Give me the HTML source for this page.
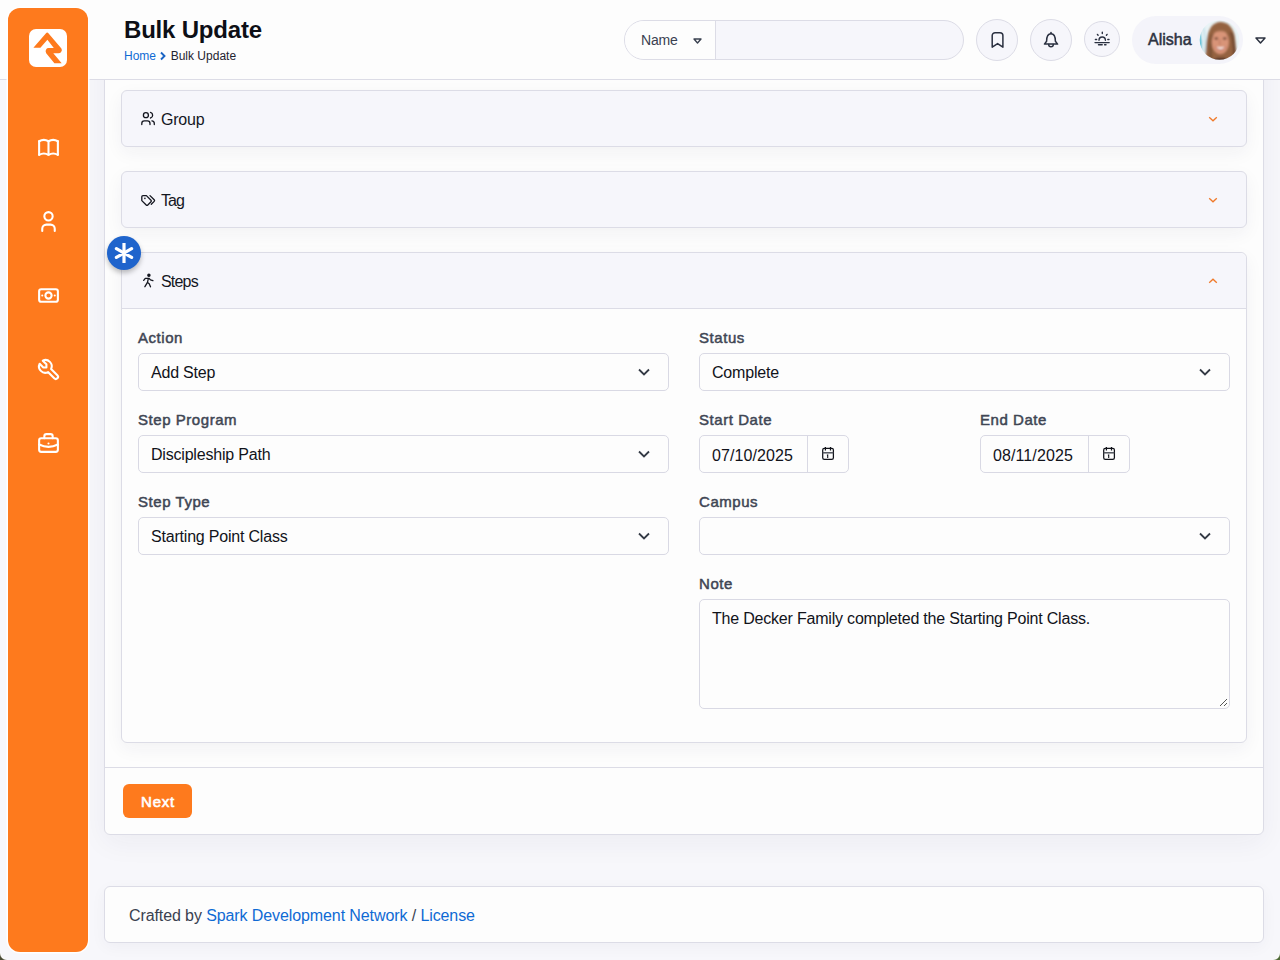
<!DOCTYPE html>
<html><head><meta charset="utf-8">
<style>
*{box-sizing:border-box;margin:0;padding:0}
html,body{width:1280px;height:960px;overflow:hidden}
body{background:#f7f7fb;font-family:"Liberation Sans",sans-serif;color:#1f2330;position:relative}
.abs{position:absolute}
#header{left:0;top:0;width:1280px;height:80px;background:#fdfdfd;border-bottom:1px solid #dcdce6}
#sidebar{left:8px;top:8px;width:80px;height:944px;background:#fe7a1d;border-radius:12px;box-shadow:0 0 0 1.5px rgba(255,255,255,.9)}
.ico{position:absolute;left:27.5px;width:25px;height:25px}
.title{left:124px;top:15px;font-size:24px;line-height:30px;font-weight:bold;color:#0d0f16;letter-spacing:-0.2px}
.crumb{left:124px;top:48px;font-size:12px;line-height:16px;color:#1f2330}
.crumb a{color:#0f6ad4;text-decoration:none}
#search{left:624px;top:20px;width:340px;height:40px;border:1px solid #dcdce6;border-radius:20px;background:#f6f6fb;overflow:hidden}
#search .l{position:absolute;left:0;top:0;width:91px;height:38px;background:#fdfdfd;border-right:1px solid #dcdce6}
.cbtn{position:absolute;border:1px solid #dcdce6;border-radius:50%;background:#f6f6fb}
#pill{left:1132px;top:16px;width:111px;height:48px;border-radius:24px;background:#f4f4fa}
#card{left:104px;top:-20px;width:1160px;height:855px;background:#fdfdfd;border:1px solid #dcdce6;border-radius:6px;box-shadow:0 8px 28px rgba(30,30,70,.05)}
.panel{position:absolute;left:121px;width:1126px;border:1px solid #dcdce6;border-radius:6px;background:#f6f6fb;box-shadow:0 6px 18px rgba(30,30,70,.05)}
.ph{position:absolute;left:0;top:0;width:100%;height:56px}
.ph .t{position:absolute;left:39px;top:20px;font-size:16px;line-height:18px;color:#14161f}
.ph svg.i{position:absolute;left:18px;top:19px}
.ph svg.c{position:absolute;left:1086px;top:25px}
.lbl{position:absolute;font-size:15px;color:#3f4654;-webkit-text-stroke:0.5px #3f4654;letter-spacing:0.55px;line-height:18px}
.inp{position:absolute;height:38px;border:1px solid #d9d9e4;border-radius:5px;background:#fdfdfd}
.inp .v{position:absolute;left:12px;top:10px;font-size:16px;line-height:18px;color:#11131a;letter-spacing:-0.2px;white-space:nowrap}
.inp svg.dd{position:absolute;right:18px;top:14px}
</style></head><body>

<div id="card" class="abs"></div>
<div id="header" class="abs"></div>
<div class="abs title">Bulk Update</div>
<div class="abs crumb"><a>Home</a> <svg width="8" height="10" viewBox="0 0 8 10" style="vertical-align:-1px"><path d="M2 1.5L5.5 5L2 8.5" fill="none" stroke="#1a64c4" stroke-width="1.9"/></svg> Bulk Update</div>

<div id="search" class="abs"><div class="l"></div>
  <div class="abs" style="left:16px;top:11px;font-size:14px;line-height:16px;color:#3a4150;letter-spacing:-0.2px">Name</div>
  <svg class="abs" style="left:68px;top:17px" width="9" height="6" viewBox="0 0 9 6"><path d="M1 1H8L4.5 5Z" fill="none" stroke="#3a4150" stroke-width="1.4" stroke-linejoin="round"/></svg>
</div>

<div class="cbtn" style="left:976px;top:19px;width:42px;height:42px"></div>
<svg class="abs" style="left:976px;top:19px" width="42" height="42" viewBox="976 19 42 42" fill="none" stroke="#2a3040" stroke-width="1.5" stroke-linejoin="round"><path d="M992.2 47.2V35.6a2.9 2.9 0 0 1 2.9 -2.9h4.9a2.9 2.9 0 0 1 2.9 2.9V47.2L997.6 43.6Z"/></svg>
<div class="cbtn" style="left:1030px;top:19px;width:42px;height:42px"></div>
<svg class="abs" style="left:1030px;top:19px" width="42" height="42" viewBox="1030 19 42 42" fill="none" stroke="#2a3040" stroke-width="1.5" stroke-linejoin="round" stroke-linecap="round"><path d="M1051 32.6v1"/><path d="M1046.6 41.2C1046.6 36.2 1048.4 33.7 1051 33.7C1053.6 33.7 1055.4 36.2 1055.4 41.2L1057.6 44.1H1044.4Z"/><path d="M1048.7 44.5a2.3 2.3 0 0 0 4.6 0"/></svg>
<div class="cbtn" style="left:1084px;top:21px;width:36px;height:36px"></div>
<svg class="abs" style="left:1084px;top:21px" width="36" height="36" viewBox="1084 21 36 36" fill="none" stroke="#2a3040" stroke-width="1.4" stroke-linecap="round"><path d="M1095 42.6H1109.2"/><path d="M1098.5 44.8H1102.2M1104.6 44.8H1106"/><path d="M1099 40.2a3.2 3.2 0 0 1 6.4 0"/><path d="M1102.3 32.2V33.6M1097.4 34.4l0.7 0.8M1107.1 34.4l-0.7 0.8M1095.4 39.5H1096.6M1107.8 39.5H1109"/></svg>

<div id="pill" class="abs"></div>
<div class="abs" style="left:1148px;top:31px;font-size:16px;line-height:18px;color:#2c3240;-webkit-text-stroke:0.5px #2c3240">Alisha</div>
<svg class="abs" style="left:1199px;top:20px" width="41" height="41" viewBox="-0.5 0 41 41">
  <defs><clipPath id="av"><circle cx="20" cy="20" r="19.8"/></clipPath><filter id="bl" x="-20%" y="-20%" width="140%" height="140%"><feGaussianBlur stdDeviation="0.9"/></filter></defs>
  <g clip-path="url(#av)">
    <rect x="-1" y="-1" width="42" height="42" fill="#e9f3f6"/>
    <g filter="url(#bl)">
    <path d="M-1 6 Q4 20 1 40 L-1 40Z" fill="#3fb4d0"/>
    <path d="M3 6 Q7 16 5 32" stroke="#cfe6ee" stroke-width="3" fill="none"/>
    <path d="M6 42 C6 28 7 15 10.5 9 C13.5 3 18.5 1.8 22 2 C29 2.5 33 7.5 35 15 C36.5 23 36.5 34 38 42Z" fill="#94623f"/>
    <path d="M30 12 C33 18 34 30 33 40 L37 40 C36 30 35.5 20 33 13Z" fill="#6e4630"/>
    <path d="M10 40 C9 30 10 20 12 14 L14 16 C12 24 12 32 13 40Z" fill="#7a5236"/>
    <ellipse cx="20.8" cy="22" rx="8.6" ry="12" fill="#d99478"/>
    <path d="M12.5 14 C15 7 26 6.5 29.5 14 C26 10.5 17 10 12.5 14Z" fill="#9a6644"/>
    <ellipse cx="16.8" cy="18.5" rx="1.8" ry="0.9" fill="#4a2a20"/>
    <ellipse cx="25.2" cy="18.5" rx="1.8" ry="0.9" fill="#4a2a20"/>
    <path d="M20.5 19 L19.8 24 L21.5 24.2" stroke="#b97560" stroke-width="0.8" fill="none"/>
    <path d="M15.8 26.8 Q21 32 26.2 26.8 Q21 28.3 15.8 26.8Z" fill="#ffffff"/>
    <path d="M15.5 26.6 Q21 33 26.5 26.6" stroke="#b65a50" stroke-width="1" fill="none"/>
    <path d="M12 42 Q17 37 21 38 Q26 37 31 42Z" fill="#503226"/>
    </g>
  </g>
</svg>
<svg class="abs" style="left:1255px;top:37px" width="11" height="7" viewBox="0 0 11 7"><path d="M1 1H10L5.5 6Z" fill="none" stroke="#2c3240" stroke-width="1.5" stroke-linejoin="round"/></svg>

<!-- card -->
<div class="abs" style="left:105px;top:767px;width:1158px;height:1px;background:#dcdce6"></div>

<!-- panels -->
<div class="panel" style="top:90px;height:57px">
  <div class="ph">
    <div class="t" style="letter-spacing:-0.2px">Group</div>
    <svg class="c" width="10" height="6" viewBox="0 0 10 6"><path d="M1.2 1.2L5 4.8L8.8 1.2" fill="none" stroke="#f07a2a" stroke-width="1.3"/></svg>
  </div>
</div>
<div class="panel" style="top:171px;height:57px">
  <div class="ph">
    <div class="t" style="letter-spacing:-0.9px">Tag</div>
    <svg class="c" width="10" height="6" viewBox="0 0 10 6"><path d="M1.2 1.2L5 4.8L8.8 1.2" fill="none" stroke="#f07a2a" stroke-width="1.3"/></svg>
  </div>
</div>
<div class="panel" style="top:252px;height:491px;background:#fdfdfd">
  <div class="ph" style="background:#f6f6fb;border-bottom:1px solid #dcdce6;border-radius:6px 6px 0 0;height:56px">
    <div class="t" style="letter-spacing:-0.8px">Steps</div>
    <svg class="c" width="10" height="6" viewBox="0 0 10 6"><path d="M1.2 4.8L5 1.2L8.8 4.8" fill="none" stroke="#f07a2a" stroke-width="1.3"/></svg>
  </div>
</div>


<!-- panel icons (page coords) -->
<svg class="abs" style="left:136px;top:106px" width="24" height="24" viewBox="136 106 24 24" fill="none" stroke="#14161f" stroke-width="1.3" stroke-linecap="round" stroke-linejoin="round">
  <circle cx="145.9" cy="115.2" r="2.5"/>
  <path d="M150.5 112.4a2.9 2.9 0 0 1 0 5.6"/>
  <path d="M141.8 124.6v-1.2a2.5 2.5 0 0 1 2.5 -2.5h3.2a2.5 2.5 0 0 1 2.5 2.5v1.2"/>
  <path d="M151.9 120.9a2.6 2.6 0 0 1 2.4 2.5v1.2"/>
</svg>
<svg class="abs" style="left:136px;top:188px" width="24" height="24" viewBox="136 188 24 24" fill="none" stroke="#14161f" stroke-width="1.3" stroke-linecap="round" stroke-linejoin="round">
  <path d="M141.8 196.8q0-1.2 1.2-1.2h3.4l4.6 4.6q0.8 0.8 0 1.6l-3.2 3.2q-0.8 0.8 -1.6 0l-4.4 -4.4z"/>
  <path d="M144.9 198.4h.01" stroke-width="1.6"/>
  <path d="M150 195.6l4.2 4.2q0.8 0.8 0 1.6l-2.9 2.9"/>
</svg>
<svg class="abs" style="left:136px;top:268px" width="24" height="24" viewBox="136 268 24 24" fill="none" stroke="#14161f" stroke-width="1.3" stroke-linecap="round" stroke-linejoin="round">
  <circle cx="148.9" cy="275.3" r="1.1" fill="#14161f"/>
  <path d="M143.7 280.4l1.6 -2.1h3.6l1.6 1.6l2.4 0.8"/>
  <path d="M148.3 278.6l-0.8 3.8l-2.6 4.3"/>
  <path d="M147.5 282.4l1.7 1.4l1.3 3"/>
</svg>

<!-- badge -->
<div class="abs" style="left:107px;top:236px;width:34px;height:34px;border-radius:50%;background:#1f64cc;box-shadow:0 3px 5px rgba(0,0,0,.25)"></div>
<svg class="abs" style="left:104px;top:233px" width="40" height="40" viewBox="104 233 40 40" stroke="#fff" stroke-width="3.2"><path d="M124 243V263"/><path d="M116.4 248.6L131.6 257.4M116.4 257.4L131.6 248.6" stroke-linecap="round"/></svg>

<!-- form -->
<div class="lbl" style="left:138px;top:329px">Action</div>
<div class="inp" style="left:138px;top:353px;width:531px"><div class="v">Add Step</div><svg class="dd" width="12" height="8" viewBox="0 0 12 8"><path d="M1 1.5L6 6.5L11 1.5" fill="none" stroke="#343a45" stroke-width="1.8"/></svg></div>
<div class="lbl" style="left:138px;top:411px">Step Program</div>
<div class="inp" style="left:138px;top:435px;width:531px"><div class="v">Discipleship Path</div><svg class="dd" width="12" height="8" viewBox="0 0 12 8"><path d="M1 1.5L6 6.5L11 1.5" fill="none" stroke="#343a45" stroke-width="1.8"/></svg></div>
<div class="lbl" style="left:138px;top:493px">Step Type</div>
<div class="inp" style="left:138px;top:517px;width:531px"><div class="v">Starting Point Class</div><svg class="dd" width="12" height="8" viewBox="0 0 12 8"><path d="M1 1.5L6 6.5L11 1.5" fill="none" stroke="#343a45" stroke-width="1.8"/></svg></div>

<div class="lbl" style="left:699px;top:329px">Status</div>
<div class="inp" style="left:699px;top:353px;width:531px"><div class="v">Complete</div><svg class="dd" width="12" height="8" viewBox="0 0 12 8"><path d="M1 1.5L6 6.5L11 1.5" fill="none" stroke="#343a45" stroke-width="1.8"/></svg></div>
<div class="lbl" style="left:699px;top:411px">Start Date</div>
<div class="inp" style="left:699px;top:435px;width:150px"><div class="v" style="letter-spacing:0.1px;top:11px">07/10/2025</div><div class="abs" style="left:107px;top:0;width:1px;height:36px;background:#d9d9e4"></div>
  <svg class="abs" style="left:121px;top:10px" width="16" height="16" viewBox="0 0 16 16" fill="none" stroke="#11131a" stroke-width="1.25"><rect x="1.7" y="2.4" width="10.7" height="10.9" rx="1.6"/><path d="M1.7 6.8h10.7" stroke="#50545c" stroke-width="1.5"/><path d="M4.4 1v3.4M9.5 1v3.4"/><path d="M5.9 9.3l0.8-0.3v3" stroke-width="1.1"/></svg></div>
<div class="lbl" style="left:980px;top:411px">End Date</div>
<div class="inp" style="left:980px;top:435px;width:150px"><div class="v" style="letter-spacing:0.1px;top:11px">08/11/2025</div><div class="abs" style="left:107px;top:0;width:1px;height:36px;background:#d9d9e4"></div>
  <svg class="abs" style="left:121px;top:10px" width="16" height="16" viewBox="0 0 16 16" fill="none" stroke="#11131a" stroke-width="1.25"><rect x="1.7" y="2.4" width="10.7" height="10.9" rx="1.6"/><path d="M1.7 6.8h10.7" stroke="#50545c" stroke-width="1.5"/><path d="M4.4 1v3.4M9.5 1v3.4"/><path d="M5.9 9.3l0.8-0.3v3" stroke-width="1.1"/></svg></div>
<div class="lbl" style="left:699px;top:493px">Campus</div>
<div class="inp" style="left:699px;top:517px;width:531px"><svg class="dd" width="12" height="8" viewBox="0 0 12 8"><path d="M1 1.5L6 6.5L11 1.5" fill="none" stroke="#343a45" stroke-width="1.8"/></svg></div>
<div class="lbl" style="left:699px;top:575px">Note</div>
<div class="inp" style="left:699px;top:599px;width:531px;height:110px"><div class="v" style="top:10px">The Decker Family completed the Starting Point Class.</div>
  <svg class="abs" style="right:1px;bottom:1px" width="10" height="10" viewBox="0 0 10 10" stroke="#555" stroke-width="1"><path d="M9 2L2 9M9 6L6 9"/></svg></div>

<!-- next -->
<div class="abs" style="left:123px;top:784px;width:69px;height:34px;background:#fe7a1d;border-radius:6px"></div>
<div class="abs" style="left:141px;top:793px;font-size:15px;line-height:18px;color:#fff;-webkit-text-stroke:0.6px #fff;letter-spacing:0.8px">Next</div>

<!-- footer -->
<div class="abs" style="left:104px;top:886px;width:1160px;height:57px;background:#fdfdfd;border:1px solid #dcdce6;border-radius:6px;box-shadow:0 4px 16px rgba(30,30,70,.04)"></div>
<div class="abs" style="left:129px;top:907px;font-size:16px;line-height:18px;color:#3a4150;letter-spacing:-0.1px;white-space:nowrap">Crafted by <span style="color:#0f6ad4">Spark Development Network</span> / <span style="color:#0f6ad4">License</span></div>

<!-- sidebar -->
<div id="sidebar" class="abs">
  <svg class="abs" style="left:21px;top:21px" width="38" height="38" viewBox="0 0 38 38">
    <rect width="38" height="38" rx="7" fill="#fff"/>
    <path d="M4.4 18.7L17 4.2Q18.2 3 19.4 4.2L32.4 19.6Q33.6 21.4 32 23.2Q31 24.3 29.5 24.3H24.3L32.7 34.2H25.4L17.2 24.2Q15.8 22 17.4 20Q18 19 19.5 19H24.8L18.4 10.8L11.4 18.7Z" fill="#fe7a1d"/>
  </svg>
  <svg class="ico" style="top:127px" viewBox="0 0 24 24" fill="none" stroke="#fff" stroke-width="2" stroke-linecap="round" stroke-linejoin="round"><path d="M3 19a9 9 0 0 1 9 0a9 9 0 0 1 9 0"/><path d="M3 6a9 9 0 0 1 9 0a9 9 0 0 1 9 0"/><path d="M3 6l0 13"/><path d="M12 6l0 13"/><path d="M21 6l0 13"/></svg>
  <svg class="ico" style="top:201px" viewBox="0 0 24 24" fill="none" stroke="#fff" stroke-width="2" stroke-linecap="round" stroke-linejoin="round"><path d="M8 7a4 4 0 1 0 8 0a4 4 0 0 0 -8 0"/><path d="M6 21v-2a4 4 0 0 1 4 -4h4a4 4 0 0 1 4 4v2"/></svg>
  <svg class="ico" style="top:275px" viewBox="0 0 24 24" fill="none" stroke="#fff" stroke-width="2" stroke-linecap="round" stroke-linejoin="round"><path d="M9 12a3 3 0 1 0 6 0a3 3 0 1 0 -6 0"/><path d="M3 8a2 2 0 0 1 2 -2h14a2 2 0 0 1 2 2v8a2 2 0 0 1 -2 2h-14a2 2 0 0 1 -2 -2z"/><path d="M18 12l.01 0"/><path d="M6 12l.01 0"/></svg>
  <svg class="ico" style="top:349px" viewBox="0 0 24 24" fill="none" stroke="#fff" stroke-width="2" stroke-linecap="round" stroke-linejoin="round"><path d="M7 10h3v-3l-3.5 -3.5a6 6 0 0 1 8 8l6 6a2 2 0 0 1 -3 3l-6 -6a6 6 0 0 1 -8 -8l3.5 3.5"/></svg>
  <svg class="ico" style="top:423px" viewBox="0 0 24 24" fill="none" stroke="#fff" stroke-width="2" stroke-linecap="round" stroke-linejoin="round"><path d="M3 9a2 2 0 0 1 2 -2h14a2 2 0 0 1 2 2v9a2 2 0 0 1 -2 2h-14a2 2 0 0 1 -2 -2z"/><path d="M8 7v-2a2 2 0 0 1 2 -2h4a2 2 0 0 1 2 2v2"/><path d="M12 12l0 .01"/><path d="M3 13a20 20 0 0 0 18 0"/></svg>
</div>

<div class="abs" style="left:0;top:953px;width:7px;height:7px;background:radial-gradient(circle at 7px 0,rgba(255,255,255,0) 5.6px,rgba(255,255,255,.95) 6.4px,#4a4b36 7.6px)"></div>
<div class="abs" style="left:1273px;top:953px;width:7px;height:7px;background:radial-gradient(circle at 0 0,rgba(255,255,255,0) 5.6px,rgba(255,255,255,.95) 6.4px,#4f6a37 7.6px)"></div>
</body></html>
